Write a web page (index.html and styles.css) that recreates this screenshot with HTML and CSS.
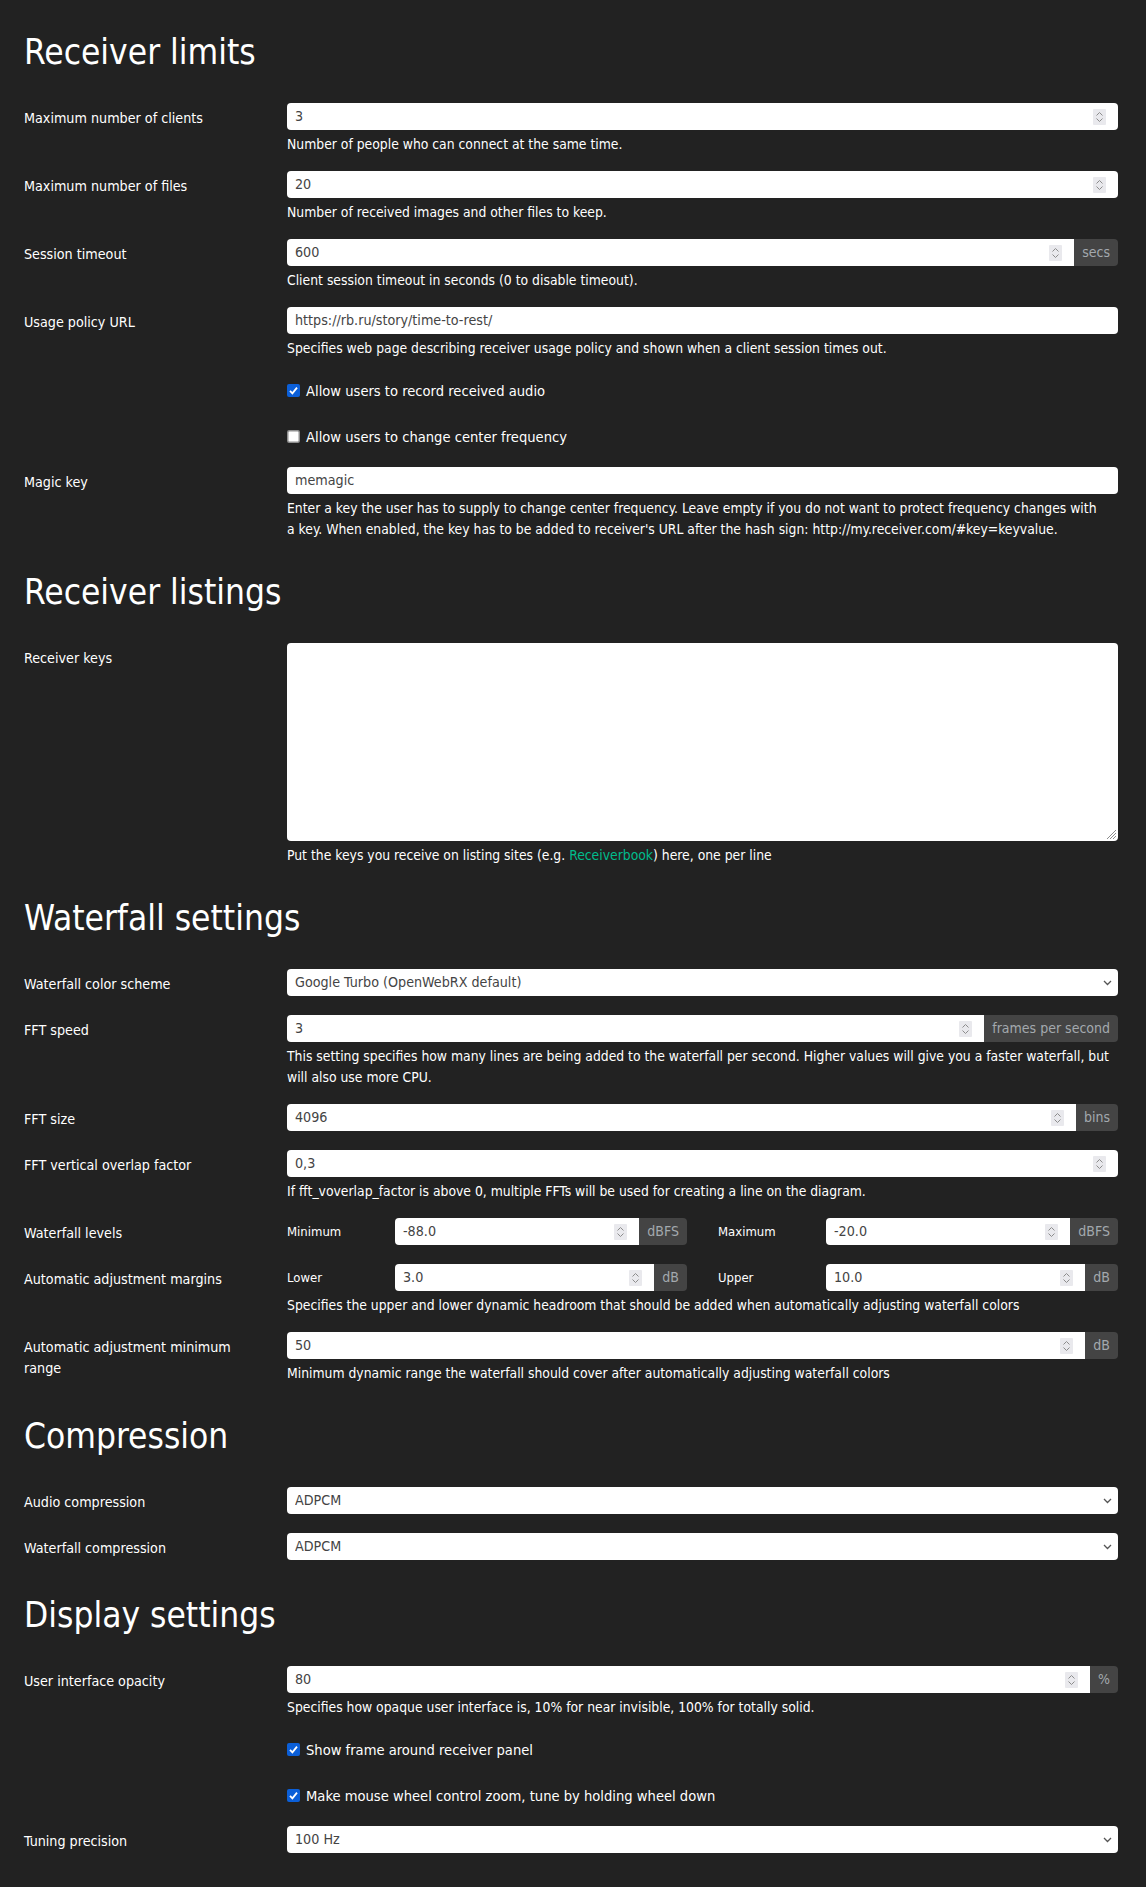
FILE: index.html
```html
<!DOCTYPE html>
<html lang="en">
<head>
<meta charset="utf-8">
<title>Settings</title>
<link rel="stylesheet" href="styles.css">
</head>
<body>
<div class="page">

  <h2 class="section-title">Receiver limits</h2>

  <div class="row">
    <div class="row-label">Maximum number of clients</div>
    <div class="control">
      <div class="field"><span class="val">3</span><svg class="spin" width="13" height="16" viewBox="0 0 13 16"><rect width="13" height="16" rx="1" fill="#e9e9ed"/><polyline points="3.5,6.5 6.5,3.5 9.5,6.5" fill="none" stroke="#8c8c8c" stroke-width="1"/><polyline points="3.5,9.5 6.5,12.5 9.5,9.5" fill="none" stroke="#8c8c8c" stroke-width="1"/></svg></div>
      <div class="help">Number of people who can connect at the same time.</div>
    </div>
  </div>

  <div class="row">
    <div class="row-label">Maximum number of files</div>
    <div class="control">
      <div class="field"><span class="val">20</span><svg class="spin" width="13" height="16" viewBox="0 0 13 16"><rect width="13" height="16" rx="1" fill="#e9e9ed"/><polyline points="3.5,6.5 6.5,3.5 9.5,6.5" fill="none" stroke="#8c8c8c" stroke-width="1"/><polyline points="3.5,9.5 6.5,12.5 9.5,9.5" fill="none" stroke="#8c8c8c" stroke-width="1"/></svg></div>
      <div class="help">Number of received images and other files to keep.</div>
    </div>
  </div>

  <div class="row">
    <div class="row-label">Session timeout</div>
    <div class="control">
      <div class="group">
        <div class="field"><span class="val">600</span><svg class="spin" width="13" height="16" viewBox="0 0 13 16"><rect width="13" height="16" rx="1" fill="#e9e9ed"/><polyline points="3.5,6.5 6.5,3.5 9.5,6.5" fill="none" stroke="#8c8c8c" stroke-width="1"/><polyline points="3.5,9.5 6.5,12.5 9.5,9.5" fill="none" stroke="#8c8c8c" stroke-width="1"/></svg></div>
        <div class="addon">secs</div>
      </div>
      <div class="help">Client session timeout in seconds (0 to disable timeout).</div>
    </div>
  </div>

  <div class="row">
    <div class="row-label">Usage policy URL</div>
    <div class="control">
      <div class="field"><span class="val">https://rb.ru/story/time-to-rest/</span></div>
      <div class="help">Specifies web page describing receiver usage policy and shown when a client session times out.</div>
    </div>
  </div>

  <div class="row">
    <div class="row-label empty"></div>
    <div class="control check">
      <svg class="cb" width="13" height="13" viewBox="0 0 13 13"><rect width="13" height="13" rx="2" fill="#0b5fd8"/><path d="M3 6.8 L5.4 9.3 L10 3.6" fill="none" stroke="#fff" stroke-width="1.8"/></svg>
      <span>Allow users to record received audio</span>
    </div>
  </div>

  <div class="row">
    <div class="row-label empty"></div>
    <div class="control check">
      <svg class="cb" width="13" height="13" viewBox="0 0 13 13"><rect x="0.75" y="0.75" width="11.5" height="11.5" rx="1.5" fill="#fff" stroke="#8f8f8f" stroke-width="1.5"/></svg>
      <span>Allow users to change center frequency</span>
    </div>
  </div>

  <div class="row">
    <div class="row-label">Magic key</div>
    <div class="control">
      <div class="field"><span class="val">memagic</span></div>
      <div class="help">Enter a key the user has to supply to change center frequency. Leave empty if you do not want to protect frequency changes with a&nbsp;key. When enabled, the key has to be added to receiver's URL after the hash sign: http://my.receiver.com/#key=keyvalue.</div>
    </div>
  </div>

  <h2 class="section-title">Receiver listings</h2>

  <div class="row">
    <div class="row-label">Receiver keys</div>
    <div class="control">
      <div class="textarea"><svg width="12" height="12" viewBox="0 0 12 12"><g stroke="#8c8c8c" stroke-width="1"><line x1="11" y1="2" x2="2" y2="11"/><line x1="11" y1="5" x2="5" y2="11"/><line x1="11" y1="8" x2="8" y2="11"/></g></svg></div>
      <div class="help">Put the keys you receive on listing sites (e.g. <a class="link" href="#">Receiverbook</a>) here, one per line</div>
    </div>
  </div>

  <h2 class="section-title">Waterfall settings</h2>

  <div class="row">
    <div class="row-label">Waterfall color scheme</div>
    <div class="control">
      <div class="field select"><span class="val">Google Turbo (OpenWebRX default)</span><svg class="chev" width="9" height="6" viewBox="0 0 9 6"><polyline points="1,1 4.5,4.5 8,1" fill="none" stroke="#555" stroke-width="1.3"/></svg></div>
    </div>
  </div>

  <div class="row">
    <div class="row-label">FFT speed</div>
    <div class="control">
      <div class="group">
        <div class="field"><span class="val">3</span><svg class="spin" width="13" height="16" viewBox="0 0 13 16"><rect width="13" height="16" rx="1" fill="#e9e9ed"/><polyline points="3.5,6.5 6.5,3.5 9.5,6.5" fill="none" stroke="#8c8c8c" stroke-width="1"/><polyline points="3.5,9.5 6.5,12.5 9.5,9.5" fill="none" stroke="#8c8c8c" stroke-width="1"/></svg></div>
        <div class="addon">frames per second</div>
      </div>
      <div class="help">This setting specifies how many lines are being added to the waterfall per second. Higher values will give you a faster waterfall, but will also use more CPU.</div>
    </div>
  </div>

  <div class="row">
    <div class="row-label">FFT size</div>
    <div class="control">
      <div class="group">
        <div class="field"><span class="val">4096</span><svg class="spin" width="13" height="16" viewBox="0 0 13 16"><rect width="13" height="16" rx="1" fill="#e9e9ed"/><polyline points="3.5,6.5 6.5,3.5 9.5,6.5" fill="none" stroke="#8c8c8c" stroke-width="1"/><polyline points="3.5,9.5 6.5,12.5 9.5,9.5" fill="none" stroke="#8c8c8c" stroke-width="1"/></svg></div>
        <div class="addon">bins</div>
      </div>
    </div>
  </div>

  <div class="row">
    <div class="row-label">FFT vertical overlap factor</div>
    <div class="control">
      <div class="field"><span class="val">0,3</span><svg class="spin" width="13" height="16" viewBox="0 0 13 16"><rect width="13" height="16" rx="1" fill="#e9e9ed"/><polyline points="3.5,6.5 6.5,3.5 9.5,6.5" fill="none" stroke="#8c8c8c" stroke-width="1"/><polyline points="3.5,9.5 6.5,12.5 9.5,9.5" fill="none" stroke="#8c8c8c" stroke-width="1"/></svg></div>
      <div class="help">If fft_voverlap_factor is above 0, multiple FFTs will be used for creating a line on the diagram.</div>
    </div>
  </div>

  <div class="row">
    <div class="row-label">Waterfall levels</div>
    <div class="control">
      <div class="pair">
        <div class="half">
          <div class="sub-label">Minimum</div>
          <div class="group">
            <div class="field"><span class="val">-88.0</span><svg class="spin" width="13" height="16" viewBox="0 0 13 16"><rect width="13" height="16" rx="1" fill="#e9e9ed"/><polyline points="3.5,6.5 6.5,3.5 9.5,6.5" fill="none" stroke="#8c8c8c" stroke-width="1"/><polyline points="3.5,9.5 6.5,12.5 9.5,9.5" fill="none" stroke="#8c8c8c" stroke-width="1"/></svg></div>
            <div class="addon">dBFS</div>
          </div>
        </div>
        <div class="half">
          <div class="sub-label">Maximum</div>
          <div class="group">
            <div class="field"><span class="val">-20.0</span><svg class="spin" width="13" height="16" viewBox="0 0 13 16"><rect width="13" height="16" rx="1" fill="#e9e9ed"/><polyline points="3.5,6.5 6.5,3.5 9.5,6.5" fill="none" stroke="#8c8c8c" stroke-width="1"/><polyline points="3.5,9.5 6.5,12.5 9.5,9.5" fill="none" stroke="#8c8c8c" stroke-width="1"/></svg></div>
            <div class="addon">dBFS</div>
          </div>
        </div>
      </div>
    </div>
  </div>

  <div class="row">
    <div class="row-label">Automatic adjustment margins</div>
    <div class="control">
      <div class="pair">
        <div class="half">
          <div class="sub-label">Lower</div>
          <div class="group">
            <div class="field"><span class="val">3.0</span><svg class="spin" width="13" height="16" viewBox="0 0 13 16"><rect width="13" height="16" rx="1" fill="#e9e9ed"/><polyline points="3.5,6.5 6.5,3.5 9.5,6.5" fill="none" stroke="#8c8c8c" stroke-width="1"/><polyline points="3.5,9.5 6.5,12.5 9.5,9.5" fill="none" stroke="#8c8c8c" stroke-width="1"/></svg></div>
            <div class="addon">dB</div>
          </div>
        </div>
        <div class="half">
          <div class="sub-label">Upper</div>
          <div class="group">
            <div class="field"><span class="val">10.0</span><svg class="spin" width="13" height="16" viewBox="0 0 13 16"><rect width="13" height="16" rx="1" fill="#e9e9ed"/><polyline points="3.5,6.5 6.5,3.5 9.5,6.5" fill="none" stroke="#8c8c8c" stroke-width="1"/><polyline points="3.5,9.5 6.5,12.5 9.5,9.5" fill="none" stroke="#8c8c8c" stroke-width="1"/></svg></div>
            <div class="addon">dB</div>
          </div>
        </div>
      </div>
      <div class="help">Specifies the upper and lower dynamic headroom that should be added when automatically adjusting waterfall colors</div>
    </div>
  </div>

  <div class="row">
    <div class="row-label">Automatic adjustment minimum range</div>
    <div class="control">
      <div class="group">
        <div class="field"><span class="val">50</span><svg class="spin" width="13" height="16" viewBox="0 0 13 16"><rect width="13" height="16" rx="1" fill="#e9e9ed"/><polyline points="3.5,6.5 6.5,3.5 9.5,6.5" fill="none" stroke="#8c8c8c" stroke-width="1"/><polyline points="3.5,9.5 6.5,12.5 9.5,9.5" fill="none" stroke="#8c8c8c" stroke-width="1"/></svg></div>
        <div class="addon">dB</div>
      </div>
      <div class="help">Minimum dynamic range the waterfall should cover after automatically adjusting waterfall colors</div>
    </div>
  </div>

  <h2 class="section-title">Compression</h2>

  <div class="row">
    <div class="row-label">Audio compression</div>
    <div class="control">
      <div class="field select"><span class="val">ADPCM</span><svg class="chev" width="9" height="6" viewBox="0 0 9 6"><polyline points="1,1 4.5,4.5 8,1" fill="none" stroke="#555" stroke-width="1.3"/></svg></div>
    </div>
  </div>

  <div class="row">
    <div class="row-label">Waterfall compression</div>
    <div class="control">
      <div class="field select"><span class="val">ADPCM</span><svg class="chev" width="9" height="6" viewBox="0 0 9 6"><polyline points="1,1 4.5,4.5 8,1" fill="none" stroke="#555" stroke-width="1.3"/></svg></div>
    </div>
  </div>

  <h2 class="section-title">Display settings</h2>

  <div class="row">
    <div class="row-label">User interface opacity</div>
    <div class="control">
      <div class="group">
        <div class="field"><span class="val">80</span><svg class="spin" width="13" height="16" viewBox="0 0 13 16"><rect width="13" height="16" rx="1" fill="#e9e9ed"/><polyline points="3.5,6.5 6.5,3.5 9.5,6.5" fill="none" stroke="#8c8c8c" stroke-width="1"/><polyline points="3.5,9.5 6.5,12.5 9.5,9.5" fill="none" stroke="#8c8c8c" stroke-width="1"/></svg></div>
        <div class="addon">%</div>
      </div>
      <div class="help">Specifies how opaque user interface is, 10% for near invisible, 100% for totally solid.</div>
    </div>
  </div>

  <div class="row">
    <div class="row-label empty"></div>
    <div class="control check">
      <svg class="cb" width="13" height="13" viewBox="0 0 13 13"><rect width="13" height="13" rx="2" fill="#0b5fd8"/><path d="M3 6.8 L5.4 9.3 L10 3.6" fill="none" stroke="#fff" stroke-width="1.8"/></svg>
      <span>Show frame around receiver panel</span>
    </div>
  </div>

  <div class="row">
    <div class="row-label empty"></div>
    <div class="control check">
      <svg class="cb" width="13" height="13" viewBox="0 0 13 13"><rect width="13" height="13" rx="2" fill="#0b5fd8"/><path d="M3 6.8 L5.4 9.3 L10 3.6" fill="none" stroke="#fff" stroke-width="1.8"/></svg>
      <span>Make mouse wheel control zoom, tune by holding wheel down</span>
    </div>
  </div>

  <div class="row">
    <div class="row-label">Tuning precision</div>
    <div class="control">
      <div class="field select"><span class="val">100 Hz</span><svg class="chev" width="9" height="6" viewBox="0 0 9 6"><polyline points="1,1 4.5,4.5 8,1" fill="none" stroke="#555" stroke-width="1.3"/></svg></div>
    </div>
  </div>

</div>
</body>
</html>
```

FILE: styles.css
```css
html, body {
  margin: 0;
  padding: 0;
  background: #222222;
}

body {
  color: #ffffff;
  font-family: "DejaVu Sans Condensed", "DejaVu Sans", sans-serif;
  font-stretch: semi-condensed;
  font-size: 14px;
  line-height: 21px;
}

.page {
  padding: 1px 28px 16px 24px;
}

.section-title {
  font-size: 35px;
  line-height: 40px;
  font-weight: normal;
  margin: 32px 0 31px;
}

.page > .section-title:first-child {
  margin-top: 31px;
}

.row {
  display: grid;
  grid-template-columns: 263px 1fr;
  margin-bottom: 16px;
}

.row-label {
  padding: 4.5px 24px 4.5px 0;
  line-height: 21px;
  font-size: 14.2px;
}

.row-label.empty {
  height: 30px;
  box-sizing: border-box;
}

.control {
  min-width: 0;
}

.control.check {
  display: flex;
  align-items: center;
  height: 30px;
  font-size: 14.6px;
}

.cb {
  flex: none;
  margin-right: 6px;
}

.help {
  margin-top: 4px;
  line-height: 21px;
  font-size: 13.8px;
}

.link {
  color: #00bc8c;
  text-decoration: none;
}

.sub-label {
  font-size: 13px;
}

.field {
  height: 27px;
  box-sizing: border-box;
  background: #ffffff;
  border-radius: 4px;
  display: flex;
  align-items: center;
  padding: 0 12px 0 8px;
  color: #444444;
  flex: 1;
  min-width: 0;
  font-size: 14.2px;
}

.field .val {
  flex: 1;
  white-space: nowrap;
  overflow: hidden;
}

.spin {
  flex: none;
}

.field.select {
  padding-right: 6px;
}

.chev {
  flex: none;
}

.group {
  display: flex;
  height: 27px;
}

.group .field {
  border-radius: 4px 0 0 4px;
  padding-right: 12px;
}

.addon {
  flex: none;
  background: #444444;
  color: #a3a9ae;
  padding: 0 8px;
  display: flex;
  align-items: center;
  border-radius: 0 4px 4px 0;
}

.textarea {
  height: 198px;
  box-sizing: border-box;
  background: #ffffff;
  border-radius: 4px;
  display: flex;
  align-items: flex-end;
  justify-content: flex-end;
  padding: 1px;
}

.pair {
  display: grid;
  grid-template-columns: 1fr 1fr;
  column-gap: 31px;
}

.half {
  display: grid;
  grid-template-columns: 108px 1fr;
  align-items: center;
}
```
